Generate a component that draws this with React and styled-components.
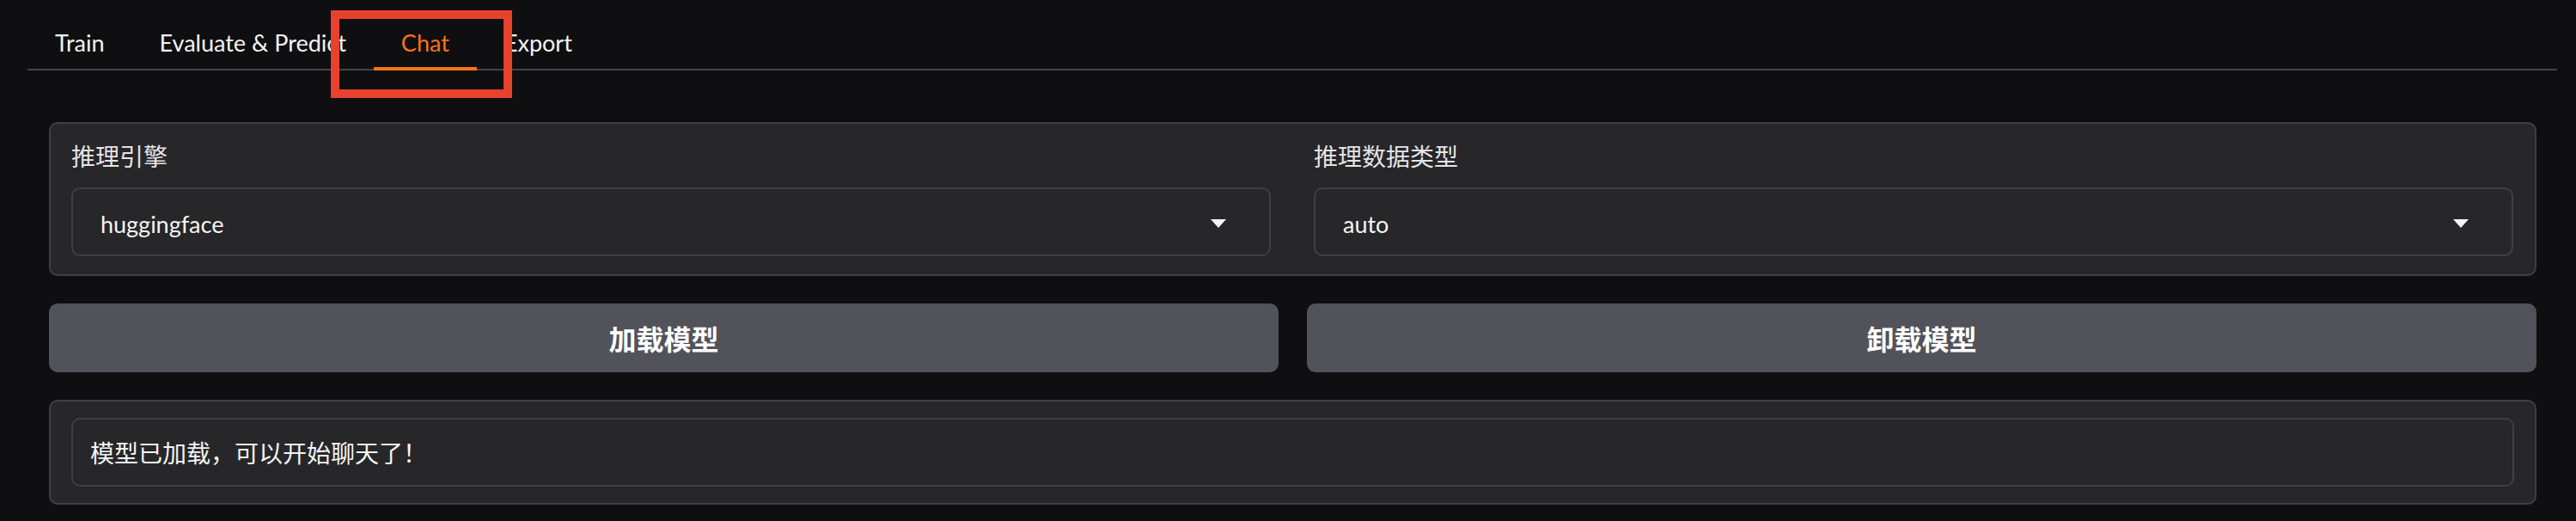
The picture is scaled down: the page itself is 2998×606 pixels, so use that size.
import styled, { createGlobalStyle } from "styled-components";

const tabs = [
  { id: 0, label: "Train" },
  { id: 1, label: "Evaluate & Predict" },
  { id: 2, label: "Chat" },
  { id: 3, label: "Export" },
];

const selects = [
  { id: 0, label: "推理引擎", value: "huggingface" },
  { id: 1, label: "推理数据类型", value: "auto" },
];

const GlobalStyle = createGlobalStyle`
  html, body {
    margin: 0;
    padding: 0;
    background: #0f0f11;
  }
  body {
    font-family: Lato, "Noto Sans CJK SC", sans-serif;
    color: #f4f4f5;
  }
`;

const Caret = () => (
  <svg width="18" height="10" viewBox="0 0 18 10">
    <polygon points="0,0 18,0 9,10" fill="#f4f4f5" />
  </svg>
);

const App = () => {
  return (
    <>
      <GlobalStyle />
      <Page>
        <TabNav>
          {tabs.map((tab) => (
            <TabButton key={tab.id} $active={tab.label === "Chat"}>
              {tab.label}
            </TabButton>
          ))}
        </TabNav>
        <Highlight />

        <TabPanel>
          <FormPanel>
            {selects.map((item) => (
              <Field key={item.id}>
                <Label>{item.label}</Label>
                <SelectBox>
                  <SelectValue>{item.value}</SelectValue>
                  <Caret />
                </SelectBox>
              </Field>
            ))}
          </FormPanel>

          <ButtonRow>
            <ActionButton>加载模型</ActionButton>
            <ActionButton>卸载模型</ActionButton>
          </ButtonRow>

          <OutputPanel>
            <TextBox>模型已加载，可以开始聊天了！</TextBox>
          </OutputPanel>
        </TabPanel>
      </Page>
    </>
  );
};

const Page = styled.div`
  position: relative;
  padding: 0 22px 18px 32px;
`;

const TabNav = styled.nav`
  display: flex;
  align-items: flex-end;
  height: 80px;
  border-bottom: 2px solid #44444c;
`;

const TabButton = styled.div`
  box-sizing: border-box;
  height: 56px;
  margin-bottom: -2px; /* sit on top of the nav rule */
  padding: 0 32px;
  border-bottom: 4px solid ${(p) => (p.$active ? "#f97316" : "transparent")};
  color: ${(p) => (p.$active ? "#f97316" : "#f4f4f5")};
  font-size: 27px;
  line-height: 48px;
  white-space: nowrap;
`;

/* red annotation box drawn over the tab strip */
const Highlight = styled.div`
  position: absolute;
  left: 385px;
  top: 12px;
  width: 211px;
  height: 102px;
  box-sizing: border-box;
  border: 10px solid #e8412c;
  pointer-events: none;
`;

const TabPanel = styled.main`
  display: flex;
  flex-direction: column;
  gap: 32px;
  padding: 60px 24px 0 25px;
`;

const Panel = styled.section`
  box-sizing: border-box;
  background: #27272a;
  border: 2px solid #3f3f46;
  border-radius: 10px;
`;

const FormPanel = styled(Panel)`
  display: grid;
  grid-template-columns: 1fr 1fr;
  column-gap: 50px;
  padding: 18px 25px 21px 24px;
`;

const Field = styled.div`
  display: flex;
  flex-direction: column;
  gap: 16px;
`;

const Label = styled.label`
  color: #e4e4e7;
  font-size: 28px;
  line-height: 40px;
`;

const SelectBox = styled.div`
  box-sizing: border-box;
  height: 80px;
  display: flex;
  align-items: center;
  justify-content: space-between;
  padding: 4px 50px 0 32px;
  border: 2px solid #3f3f46;
  border-radius: 10px;
  background: #27272a;
`;

const SelectValue = styled.span`
  font-size: 27px;
  color: #f4f4f5;
`;

const ButtonRow = styled.div`
  display: grid;
  grid-template-columns: 1fr 1fr;
  gap: 33px;
`;

const ActionButton = styled.button`
  height: 80px;
  border: none;
  border-radius: 10px;
  background: #52525b;
  color: #ffffff;
  font-family: Lato, "Noto Sans CJK SC", sans-serif;
  font-size: 32px;
  font-weight: 700;
  cursor: pointer;
`;

const OutputPanel = styled(Panel)`
  padding: 19px 24px;
`;

const TextBox = styled.div`
  box-sizing: border-box;
  height: 80px;
  display: flex;
  align-items: center;
  padding: 0 20px;
  border: 2px solid #3f3f46;
  border-radius: 10px;
  background: #27272a;
  font-size: 28px;
  color: #f4f4f5;
`;

export default App;
